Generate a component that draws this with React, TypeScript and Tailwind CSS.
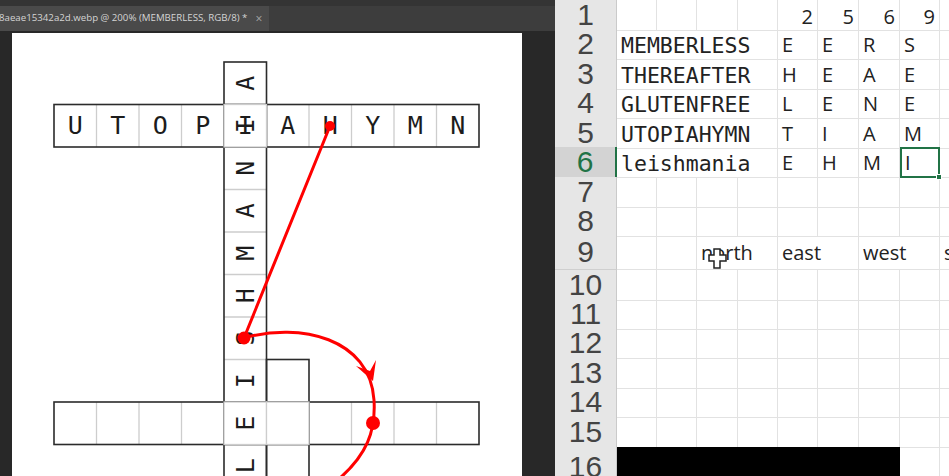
import React from "react";

const S = 42.5;
const X0 = 54;
const Y0 = 62;

const across1 = "UTOPIAHYMN".split("");
const down1 = "AINAMHSIEL".split("");

function Crossword() {
  const h1y = Y0 + S;
  const h2y = Y0 + 8 * S;
  const v1x = X0 + 4 * S;
  const v2x = X0 + 5 * S;
  const v2y = Y0 + 7 * S;
  const light = "#cdcdcd";
  const dark = "#2b2b2b";
  const ks = [1, 2, 3, 4, 5, 6, 7, 8, 9];

  return (
    <svg width={510} height={445} viewBox="12 33 510 445">
      <rect x={X0} y={h1y} width={10 * S} height={S} fill="#fff" />
      <rect x={v1x} y={Y0} width={S} height={10 * S} fill="#fff" />
      <rect x={X0} y={h2y} width={10 * S} height={S} fill="#fff" />
      <rect x={v2x} y={v2y} width={S} height={3 * S} fill="#fff" />

      {ks.map((k) => (
        <g key={k} stroke={light} strokeWidth={1.3}>
          <line x1={X0 + k * S} y1={h1y} x2={X0 + k * S} y2={h1y + S} />
          <line x1={X0 + k * S} y1={h2y} x2={X0 + k * S} y2={h2y + S} />
          <line x1={v1x} y1={Y0 + k * S} x2={v1x + S} y2={Y0 + k * S} />
        </g>
      ))}
      <g stroke={light} strokeWidth={1.3}>
        <line x1={v2x} y1={v2y + S} x2={v2x + S} y2={v2y + S} />
        <line x1={v2x} y1={v2y + 2 * S} x2={v2x + S} y2={v2y + 2 * S} />
      </g>

      <g fill="none" stroke={dark} strokeWidth={1.6}>
        <rect x={X0} y={h1y} width={10 * S} height={S} />
        <rect x={v1x} y={Y0} width={S} height={10 * S} />
        <rect x={X0} y={h2y} width={10 * S} height={S} />
        <rect x={v2x} y={v2y} width={S} height={3 * S} />
      </g>

      <g fill="#fff" stroke={light} strokeWidth={1.3}>
        <rect x={v1x} y={h1y} width={S} height={S} />
        <rect x={v1x} y={h2y} width={S} height={S} />
        <rect x={v2x} y={h2y} width={S} height={S} />
      </g>

      <g
        fontFamily="'DejaVu Sans Mono', monospace"
        fontSize={25}
        fill="#1c1c1c"
        textAnchor="middle"
        dominantBaseline="central"
      >
        {across1.map((c, i) => (
          <text key={"a" + i} x={X0 + S / 2 + i * S} y={h1y + S / 2}>
            {c}
          </text>
        ))}
        {down1.map((c, i) => {
          const cx = v1x + S / 2;
          const cy = Y0 + S / 2 + i * S;
          return (
            <text
              key={"d" + i}
              x={cx}
              y={cy}
              transform={`rotate(-90 ${cx} ${cy})`}
            >
              {c}
            </text>
          );
        })}
      </g>

      <g stroke="#ff0000" strokeWidth={3} fill="none" strokeLinecap="round">
        <line x1={330} y1={126} x2={244} y2={338} />
        <path d="M244 338 C300 322 370 338 374 400 C376 432 366 455 340 478" />
      </g>
      <g fill="#ff0000">
        <circle cx={330} cy={126} r={5} />
        <circle cx={244} cy={338} r={6.5} />
        <circle cx={373} cy={423} r={7} />
        <polygon points="356,366 373,381 376,360 370,371" />
      </g>
    </svg>
  );
}

const cols = "grid grid-cols-[62px_40px_40px_41px_40px_40px_41px_41px_40px_40px]";
const line = "border-r border-b border-[#e2e2e2]";
const sans = "font-['Open_Sans',sans-serif] text-[20px] leading-none text-[#222]";
const mono =
  "font-['DejaVu_Sans_Mono',monospace] text-[21.5px] leading-none text-[#222]";

const rowH = [
  "h-[29px]",
  "h-[30px]",
  "h-[29px]",
  "h-[30px]",
  "h-[29px]",
  "h-[30px]",
  "h-[29px]",
  "h-[29px]",
  "h-[35px]",
  "h-[29px]",
  "h-[29px]",
  "h-[30px]",
  "h-[29px]",
  "h-[30px]",
  "h-[30px]",
  "h-[40px]",
];

const words = [
  ["MEMBERLESS", "E", "E", "R", "S"],
  ["THEREAFTER", "H", "E", "A", "E"],
  ["GLUTENFREE", "L", "E", "N", "E"],
  ["UTOPIAHYMN", "T", "I", "A", "M"],
  ["leishmania", "E", "H", "M", "I"],
];

function RowHead({ n, active }: { n: number; active?: boolean }) {
  return (
    <div
      className={`flex items-center justify-center font-['Liberation_Sans',sans-serif] text-[30px] leading-none border-b ${
        active
          ? "bg-[#d3d3d3] text-[#217346] border-r-2 border-r-[#217346] border-b-[#c4c4c4]"
          : "bg-[#e6e6e6] text-[#444] border-r border-r-[#cacaca] border-b-[#cfcfcf]"
      }`}
    >
      <span>{n}</span>
    </div>
  );
}

function Cell({ text, right, span, className = "" }: any) {
  const sp =
    span === 4 ? "col-span-4" : span === 2 ? "col-span-2" : "col-span-1";
  return (
    <div
      className={`${sp} ${line} flex items-end overflow-hidden whitespace-nowrap ${
        right ? "justify-end pr-[4px]" : "pl-[4px]"
      } ${className}`}
    >
      {text}
    </div>
  );
}

function Sheet() {
  return (
    <div className="relative flex-1 overflow-hidden bg-white">
      <div className="flex flex-col">
        {/* row 1 */}
        <div className={`${cols} ${rowH[0]}`}>
          <RowHead n={1} />
          <Cell />
          <Cell />
          <Cell />
          <Cell />
          {["2", "5", "6", "9"].map((t) => (
            <Cell key={t} text={t} right className={`${sans} pb-[3px]`} />
          ))}
          <Cell />
        </div>

        {words.map((w, i) => (
          <div key={i} className={`${cols} ${rowH[i + 1]}`}>
            <RowHead n={i + 2} active={i === 4} />
            <Cell text={w[0]} span={4} className={`${mono} pl-[3px] pb-[3px]`} />
            <Cell text={w[1]} className={`${sans} pb-[4px]`} />
            <Cell text={w[2]} className={`${sans} pb-[4px]`} />
            <Cell text={w[3]} className={`${sans} pb-[4px]`} />
            {i === 4 ? (
              <div className="relative border-2 border-[#217346] flex items-end pl-[3px] pb-[3px] font-['Open_Sans',sans-serif] text-[20px] leading-none text-[#222]">
                {w[4]}
                <div className="absolute -right-[4px] -bottom-[4px] w-[6px] h-[6px] bg-[#217346] border border-white" />
              </div>
            ) : (
              <Cell text={w[4]} className={`${sans} pb-[4px]`} />
            )}
            <Cell />
          </div>
        ))}

        {[7, 8].map((n) => (
          <div key={n} className={`${cols} ${rowH[n - 1]}`}>
            <RowHead n={n} />
            {[0, 1, 2, 3, 4, 5, 6, 7, 8].map((k) => (
              <Cell key={k} />
            ))}
          </div>
        ))}

        {/* row 9 */}
        <div className={`${cols} ${rowH[8]}`}>
          <RowHead n={9} />
          <Cell />
          <Cell />
          <Cell text="north" span={2} className={`${sans} pb-[6px]`} />
          <Cell text="east" span={2} className={`${sans} pb-[6px]`} />
          <Cell text="west" span={2} className={`${sans} pb-[6px]`} />
          <Cell text="south" className={`${sans} pb-[6px]`} />
        </div>

        {[10, 11, 12, 13, 14, 15].map((n) => (
          <div key={n} className={`${cols} ${rowH[n - 1]}`}>
            <RowHead n={n} />
            {[0, 1, 2, 3, 4, 5, 6, 7, 8].map((k) => (
              <Cell key={k} />
            ))}
          </div>
        ))}

        {/* row 16 */}
        <div className={`${cols} ${rowH[15]}`}>
          <RowHead n={16} />
          <div className="col-span-7 bg-black" />
          <Cell />
          <Cell />
        </div>
      </div>

      {/* cell cursor */}
      <svg
        className="absolute left-[153px] top-[248px]"
        width={19}
        height={21}
        viewBox="0 0 19 21"
      >
        <path
          d="M6 1 H12 V7 H18 V13 H12 V20 H6 V13 H1 V7 H6 Z"
          fill="#fff"
          stroke="#222"
          strokeWidth={1.5}
        />
      </svg>
    </div>
  );
}

export default function App() {
  return (
    <div className="flex w-[949px] h-[476px] overflow-hidden bg-[#282828]">
      <div className="flex flex-col w-[555px] shrink-0">
        <div className="h-[6px] bg-[#343434]" />
        <div className="flex h-[25px] bg-[#3d3d3d]">
          <div className="flex items-center w-[270px] bg-[#4a4a4a] -ml-[1px] font-['Open_Sans',sans-serif] text-[9.7px] text-[#d4d4d4] whitespace-nowrap">
            <span>8aeae15342a2d.webp @ 200% (MEMBERLESS, RGB/8) *</span>
            <span className="ml-[8px] text-[#a8a8a8] text-[12px]">×</span>
          </div>
        </div>
        <div className="flex-1 bg-[#282828] pt-[2px] pl-[12px] overflow-hidden">
          <div className="w-[510px] h-[445px] bg-white">
            <Crossword />
          </div>
        </div>
      </div>
      <Sheet />
    </div>
  );
}
